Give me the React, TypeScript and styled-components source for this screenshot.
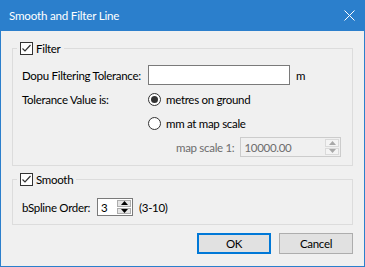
import styled, { createGlobalStyle } from "styled-components";

const GlobalStyle = createGlobalStyle`
  body {
    margin: 0;
    font-family: Lato, "Noto Sans", sans-serif;
    font-size: 11.5px;
    letter-spacing: -0.3px;
    color: #000;
    white-space: nowrap;
  }
`;

const Window = styled.div`
  width: 365px;
  height: 267px;
  box-sizing: border-box;
  border: 1px solid #2b7fcc;
  border-top: 0;
  background: #f0f0f0;
  display: flex;
  flex-direction: column;
`;

const TitleBar = styled.div`
  height: 31px;
  margin: 0 -1px;
  padding: 0 10px 0 9px;
  background: #2b7fcc;
  color: #fff;
  display: flex;
  align-items: center;
  justify-content: space-between;
  flex-shrink: 0;
`;

const Title = styled.span`
  font-size: 11.6px;
  letter-spacing: -0.2px;
  line-height: 31px;
`;

const Body = styled.div`
  padding: 11px 11px 0;
  display: flex;
  flex-direction: column;
`;

const Group = styled.fieldset<{ $gap?: number }>`
  margin: ${(p) => p.$gap || 0}px 0 0;
  padding: 0 0 8px 4px;
  border: 1px solid #dcdcdc;
  min-width: 0;
`;

const Legend = styled.legend`
  padding: 0 3px;
  height: 13px;
  display: flex;
  align-items: center;
  gap: 3px;
  line-height: 13px;
`;

const CheckBox = styled.span`
  width: 13px;
  height: 13px;
  box-sizing: border-box;
  border: 1px solid #333;
  background: #fff;
  display: inline-flex;
  align-items: center;
  justify-content: center;
`;

const FilterGrid = styled.div`
  padding: 10px 0 0 5px;
  display: grid;
  grid-template-columns: 126px auto;
  grid-auto-rows: 20px;
  row-gap: 4px;
  align-items: center;
`;

const Cell = styled.div<{ $indent?: number }>`
  display: flex;
  align-items: center;
  gap: 5px;
  padding-left: ${(p) => p.$indent || 0}px;
`;

const TextInput = styled.div`
  width: 142px;
  height: 20px;
  box-sizing: border-box;
  border: 1px solid #7a7a7a;
  background: #fff;
  margin-right: 1px;
`;

const Radio = styled.span<{ $on?: boolean }>`
  width: 13px;
  height: 13px;
  box-sizing: border-box;
  border: 1px solid #333;
  border-radius: 50%;
  background: #fff;
  display: inline-flex;
  align-items: center;
  justify-content: center;
  &::after {
    content: "";
    width: 7px;
    height: 7px;
    border-radius: 50%;
    background: ${(p) => (p.$on ? "#333" : "transparent")};
  }
`;

const Muted = styled.span`
  color: #6d6d6d;
  margin-right: 1px;
`;

const Spin = styled.div<{ $w: number; $h: number; $off?: boolean }>`
  width: ${(p) => p.$w}px;
  height: ${(p) => p.$h}px;
  box-sizing: border-box;
  border: 1px solid ${(p) => (p.$off ? "#cccccc" : "#7a7a7a")};
  background: ${(p) => (p.$off ? "#f0f0f0" : "#fff")};
  color: ${(p) => (p.$off ? "#6d6d6d" : "#000")};
  display: flex;
  align-items: center;
  padding: 1px 1px 1px 3px;
`;

const SpinText = styled.span`
  flex: 1;
`;

const SpinButtons = styled.div<{ $off?: boolean }>`
  width: 14px;
  height: 100%;
  display: flex;
  flex-direction: column;
  gap: 1px;
  & > span {
    flex: 1;
    display: flex;
    align-items: center;
    justify-content: center;
    border: 1px solid ${(p) => (p.$off ? "#dadada" : "#adadad")};
    background: ${(p) => (p.$off ? "#f4f4f4" : "#e5e5e5")};
    color: ${(p) => (p.$off ? "#a8a8a8" : "#000")};
  }
`;

const SmoothRow = styled.div`
  padding: 12px 0 0 5px;
  display: flex;
  align-items: center;
  height: 18px;
`;

const SmoothLabel = styled.span`
  width: 75px;
`;

const Hint = styled.span`
  margin-left: 6px;
`;

const Buttons = styled.div`
  margin-top: 8px;
  display: flex;
  justify-content: flex-end;
  gap: 8px;
`;

const Button = styled.div<{ $primary?: boolean }>`
  width: 74px;
  height: 21px;
  box-sizing: border-box;
  border: ${(p) => (p.$primary ? "2px solid #0078d7" : "1px solid #adadad")};
  background: #e1e1e1;
  display: flex;
  align-items: center;
  justify-content: center;
`;

const Check = () => (
  <CheckBox>
    <svg width="11" height="11" viewBox="0 0 11 11">
      <polyline points="1.5,5.5 4,8 9.5,2" fill="none" stroke="#333" strokeWidth="1.2" />
    </svg>
  </CheckBox>
);

const Arrow = ({ up }: { up?: boolean }) => (
  <svg width="7" height="4" viewBox="0 0 7 4">
    <polygon points={up ? "0,4 3.5,0 7,4" : "0,0 3.5,4 7,0"} fill="currentColor" />
  </svg>
);

const Spinner = ({ value, w, h, off }: { value: string; w: number; h: number; off?: boolean }) => (
  <Spin $w={w} $h={h} $off={off}>
    <SpinText>{value}</SpinText>
    <SpinButtons $off={off}>
      <span>
        <Arrow up />
      </span>
      <span>
        <Arrow />
      </span>
    </SpinButtons>
  </Spin>
);

export default function App() {
  return (
    <>
      <GlobalStyle />
      <Window>
        <TitleBar>
          <Title>Smooth and Filter Line</Title>
          <svg width="11" height="11" viewBox="0 0 11 11">
            <path d="M0.5 0.5 L10.5 10.5 M10.5 0.5 L0.5 10.5" stroke="#fff" strokeWidth="1" />
          </svg>
        </TitleBar>
        <Body>
          <Group>
            <Legend>
              <Check />
              Filter
            </Legend>
            <FilterGrid>
              <span>Dopu Filtering Tolerance:</span>
              <Cell>
                <TextInput />m
              </Cell>
              <span>Tolerance Value is:</span>
              <Cell>
                <Radio $on />
                metres on ground
              </Cell>
              <span />
              <Cell>
                <Radio />
                mm at map scale
              </Cell>
              <span />
              <Cell $indent={28}>
                <Muted>map scale 1:</Muted>
                <Spinner value="10000.00" w={101} h={20} off />
              </Cell>
            </FilterGrid>
          </Group>
          <Group $gap={7}>
            <Legend>
              <Check />
              Smooth
            </Legend>
            <SmoothRow>
              <SmoothLabel>bSpline Order:</SmoothLabel>
              <Spinner value="3" w={36} h={18} />
              <Hint>(3-10)</Hint>
            </SmoothRow>
          </Group>
          <Buttons>
            <Button $primary>OK</Button>
            <Button>Cancel</Button>
          </Buttons>
        </Body>
      </Window>
    </>
  );
}
